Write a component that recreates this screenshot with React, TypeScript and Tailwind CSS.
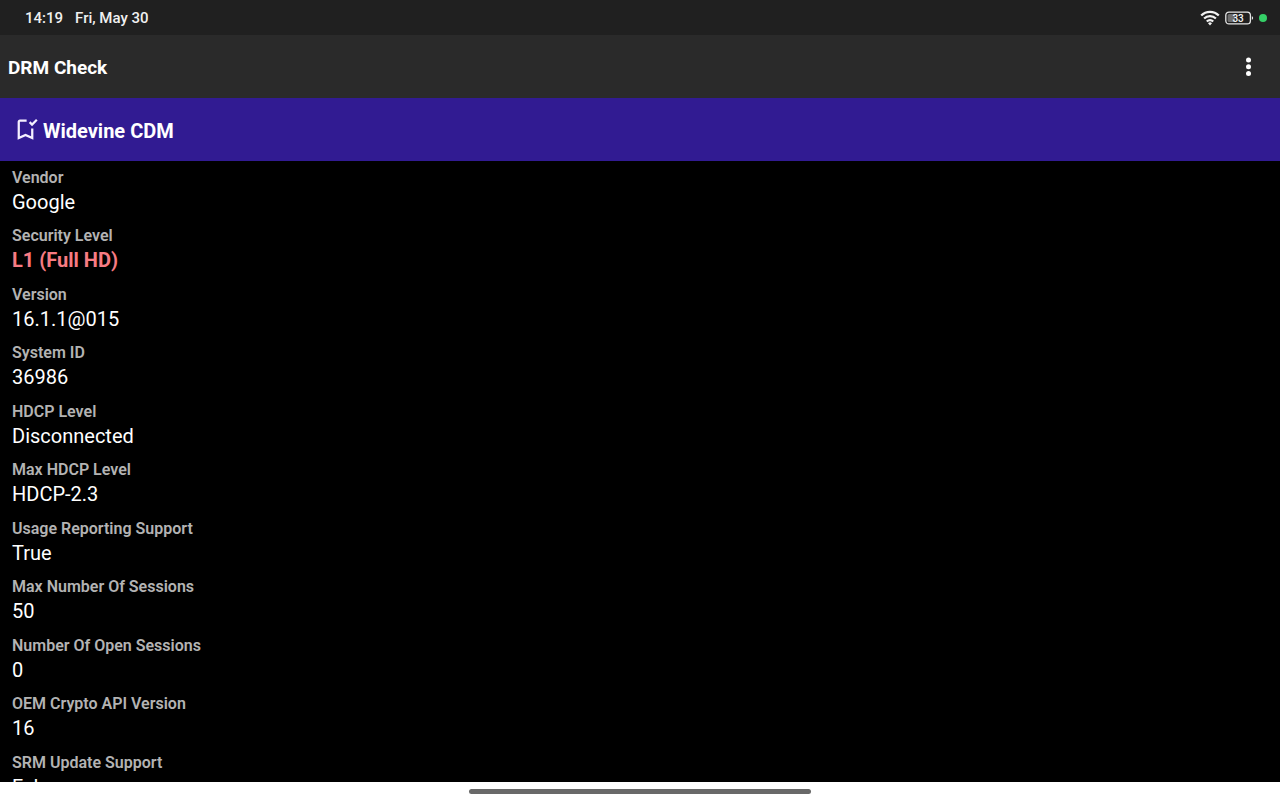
interface Property {
    label: string;
    value: string;
    highlight?: boolean;
}

const properties: Property[] = [
    { label: 'Vendor', value: 'Google' },
    { label: 'Security Level', value: 'L1 (Full HD)', highlight: true },
    { label: 'Version', value: '16.1.1@015' },
    { label: 'System ID', value: '36986' },
    { label: 'HDCP Level', value: 'Disconnected' },
    { label: 'Max HDCP Level', value: 'HDCP-2.3' },
    { label: 'Usage Reporting Support', value: 'True' },
    { label: 'Max Number Of Sessions', value: '50' },
    { label: 'Number Of Open Sessions', value: '0' },
    { label: 'OEM Crypto API Version', value: '16' },
    { label: 'SRM Update Support', value: 'False' },
];

const WifiIcon = () => (
    <svg viewBox="0 0 20 16" className="w-5 h-4" fill="none" stroke="#f2f2f2" strokeWidth="2.2" aria-hidden="true">
        <path d="M1.2 5.6a12.4 12.4 0 0 1 17.6 0" />
        <path d="M4.1 8.6a8.3 8.3 0 0 1 11.8 0" />
        <path d="M6.8 11.4a4.5 4.5 0 0 1 6.4 0" />
        <path d="M10 15.4 8 13.2a2.8 2.8 0 0 1 4 0Z" fill="#f2f2f2" stroke="none" />
    </svg>
);

const BatteryIcon = () => (
    <svg viewBox="0 0 30 14" className="w-[30px] h-[14px]" aria-hidden="true">
        <rect x="1.8" y="1.1" width="24.6" height="11.8" rx="3.2" fill="none" stroke="#e6e6e6" strokeWidth="1.3" />
        <rect x="3.6" y="2.9" width="7.4" height="8.2" rx="1.5" fill="#6e6e6e" />
        <path d="M27.8 5.2c1 .3 1.3.9 1.3 1.8s-.3 1.5-1.3 1.8Z" fill="#e6e6e6" />
        <text x="14.1" y="10.6" textAnchor="middle" fontSize="10" fontWeight="500" fill="#f5f5f5">
            33
        </text>
    </svg>
);

const BookmarkAddedIcon = () => (
    <svg viewBox="0 0 24 24" className="w-[27px] h-[27px]" fill="#f4f0ff" aria-hidden="true">
        <path d="M17 11v6.97l-5-2.14-5 2.14V5h6V3H7c-1.1 0-2 .9-2 2v16l7-3 7 3V11h-2z" />
        <path d="M17.83 9 15 6.17l1.41-1.41 1.41 1.41 3.54-3.54 1.41 1.41L17.83 9z" />
    </svg>
);

const StatusBar = () => (
    <div className="h-[35px] shrink-0 bg-[#202020] pl-[25px] pr-[13px] flex items-center justify-between text-[15px] font-medium text-[#f0f0f0]">
        <div className="flex gap-3 pt-0.5">
            <span>14:19</span>
            <span>Fri, May 30</span>
        </div>
        <div className="flex items-center">
            <WifiIcon />
            <div className="ml-1 mr-[5px]">
                <BatteryIcon />
            </div>
            <span className="w-2 h-2 rounded-full bg-[#35cf67]" />
        </div>
    </div>
);

const App = () => {
    return (
        <div className="h-screen flex flex-col bg-black text-white font-[Roboto,sans-serif]">
            <StatusBar />

            <header className="h-[63px] shrink-0 bg-[#2a2a2a] pl-2 pr-5 flex items-center justify-between">
                <h1 className="text-[19px] leading-7 pt-0.5 font-bold">DRM Check</h1>
                <button type="button" aria-label="More options" className="w-6 h-6 flex items-center justify-center">
                    <svg viewBox="0 0 24 24" className="w-6 h-6" fill="#ffffff" aria-hidden="true">
                        <circle cx="12.5" cy="5" r="2.5" />
                        <circle cx="12.5" cy="11.7" r="2.5" />
                        <circle cx="12.5" cy="18.4" r="2.5" />
                    </svg>
                </button>
            </header>

            <div className="h-[63px] shrink-0 bg-[#311b92] px-3 flex items-center gap-1">
                <BookmarkAddedIcon />
                <h2 className="text-[20px] leading-7 pt-0.5 font-bold">Widevine CDM</h2>
            </div>

            <main className="flex-1 min-h-0 overflow-y-auto [scrollbar-width:none]">
                <dl className="px-3 pt-1">
                    {properties.map(({ label, value, highlight }) => (
                        <div key={label} className="pb-[10px] even:pb-[11px]">
                            <dt className="text-base leading-[26px] font-semibold text-[#b3b3b3]">{label}</dt>
                            <dd
                                className={
                                    highlight
                                        ? 'text-[20px] leading-[22px] font-bold text-[#f77b83]'
                                        : 'text-[20px] leading-[22px]'
                                }
                            >
                                {value}
                            </dd>
                        </div>
                    ))}
                </dl>
            </main>

            <div className="h-[18px] shrink-0 bg-white flex items-center justify-center">
                <div className="w-[342px] h-[5px] rounded-full bg-[#696969]" />
            </div>
        </div>
    );
};

export default App;
